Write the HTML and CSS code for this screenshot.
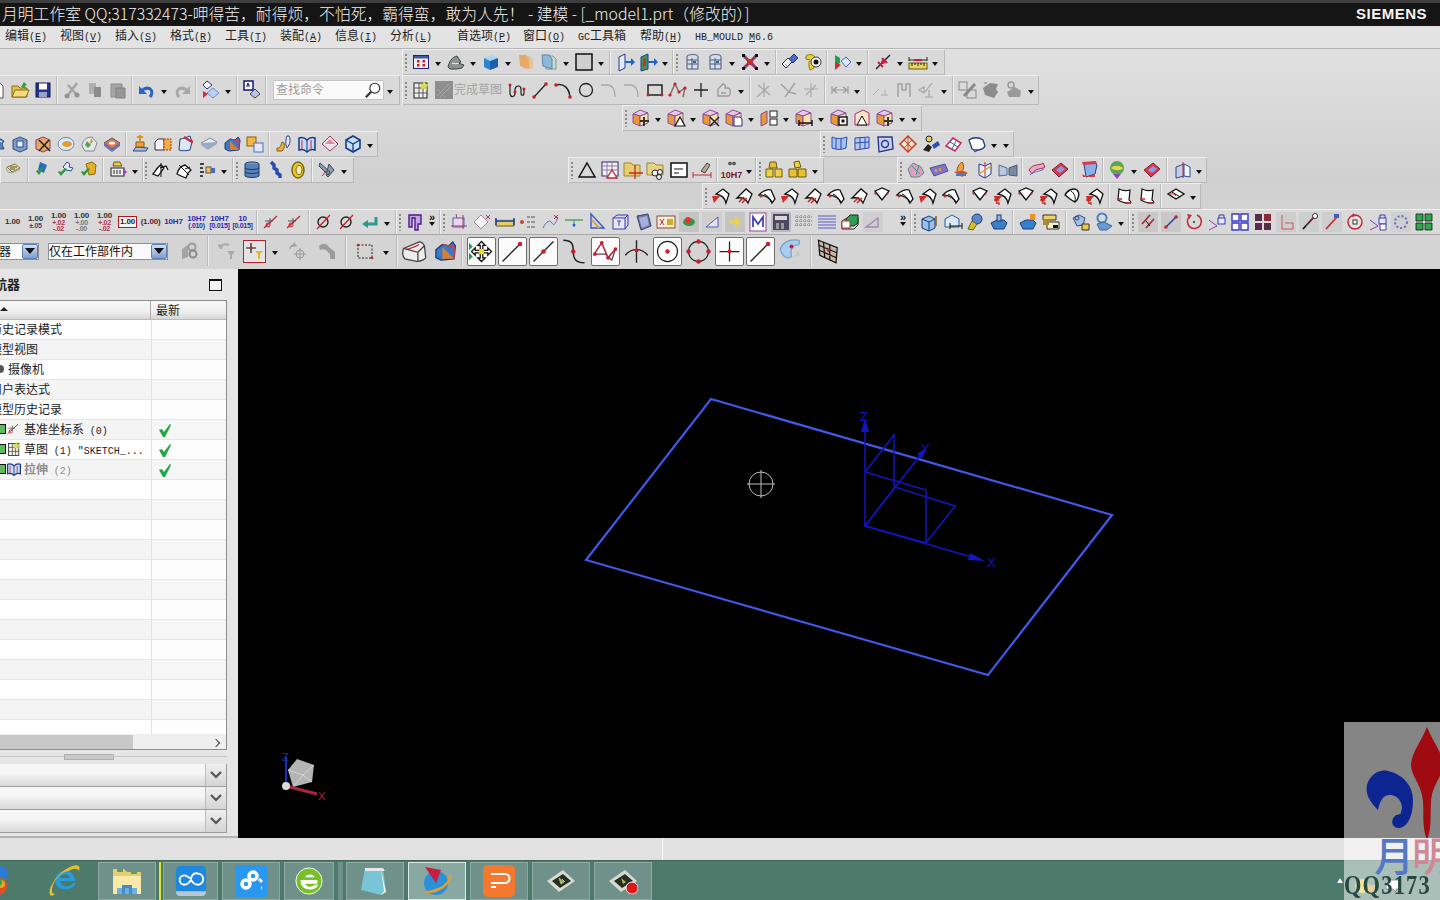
FILE: index.html
```html
<!DOCTYPE html>
<html lang="zh-CN">
<head>
<meta charset="utf-8">
<title>NX 建模</title>
<link rel="stylesheet" href="styles.css">
</head>
<body>
<svg class="defs" aria-hidden="true">
<symbol id="cal" viewBox="0 0 20 20"><rect x="2.5" y="3.5" width="15" height="13" fill="#eee" stroke="#23237a"/><rect x="3" y="4" width="14" height="2.5" fill="#3a5ab0"/><path d="M6 8h2.500v2.500H6zm5.500 0H14v2.500h-2.500zM6 12h2.500v2.500H6zm5.500 0H14v2.500h-2.500z" fill="#c81e2e"/></symbol>
<symbol id="shd" viewBox="0 0 20 20"><path d="M2 15c1-5 4-10 9-11l4 6-3 1 6 2-2 3-5 1H4z" fill="#8d9290" stroke="#3f4444"/><path d="M6 11c2 1 5 1 7 0" stroke="#fff" fill="none"/></symbol>
<symbol id="cub" viewBox="0 0 20 20"><path d="M3 6l8-3 6 3-8 3z" fill="#a8d6f2"/><path d="M3 6l6 3v9l-6-3z" fill="#2c86d0"/><path d="M9 9l8-3v9l-8 3z" fill="#1b60a8"/></symbol>
<symbol id="fo" viewBox="0 0 20 20"><path d="M4 4h10l3 3v10H7z" fill="#dcc6a8"/><path d="M3 3h7l3 4v10l-9-3z" fill="#e8a868"/></symbol>
<symbol id="fb" viewBox="0 0 20 20"><path d="M4 4h10l3 3v10H7z" fill="#c8dcc8" stroke="#7a9a9a"/><path d="M3 3h7l3 4v10l-9-3z" fill="#8cb8dc" stroke="#5a86a8"/></symbol>
<symbol id="sq" viewBox="0 0 20 20"><rect x="2" y="2" width="16" height="16" fill="#cfcfcf" stroke="#111" stroke-width="1.500"/></symbol>
<symbol id="dr" viewBox="0 0 20 20"><path d="M4 5l6-3v14l-6 3z" fill="#e4eaf4" stroke="#223a88"/><path d="M10 9h6V6l4 4-4 4v-3h-6z" fill="#1e64c8"/></symbol>
<symbol id="dv" viewBox="0 0 20 20"><path d="M3 5l7-3v15l-7 2z" fill="#3a9a5a" stroke="#223a88"/><path d="M5 7l3-1v8l-3 1z" fill="#c82e3e"/><path d="M10 9h6V6l4 4-4 4v-3h-6z" fill="#1e64c8"/></symbol>
<symbol id="db" viewBox="0 0 20 20"><path d="M5 4c3-2 9-2 11 0v13H5z" fill="#d8dee8" stroke="#4a5a7a"/><path d="M5 8h11M5 12h11M10 6v11" stroke="#4a5a7a" fill="none"/><rect x="11" y="9" width="3" height="2" fill="#2a6a9a"/></symbol>
<symbol id="nd" viewBox="0 0 20 20"><path d="M4 4l12 12M4 16 16 4" stroke="#8a3a6a" stroke-width="3"/><path d="M2 2h3v3H2zm13 0h3v3h-3zM2 15h3v3H2zm13 0h3v3h-3z" fill="#111"/><circle cx="10" cy="10" r="3" fill="#d02a2a"/></symbol>
<symbol id="kd" viewBox="0 0 20 20"><path d="M2 12l6-6 4 4-6 6z" fill="#f0f0f0" stroke="#333"/><path d="M9 7l5-5 4 4-5 5z" fill="#4a6ac8" stroke="#223a88"/><path d="M5 12l2 2" stroke="#c8a020"/></symbol>
<symbol id="ey" viewBox="0 0 20 20"><path d="M3 4c4-3 10-1 9 3-1 3-2 4-1 9l-4 2c-2-6-1-8 0-10-1-1-3 0-4-1z" fill="#e8d030" stroke="#8a7a10"/><circle cx="13" cy="10" r="5" fill="#f4f4f4" stroke="#333"/><circle cx="13" cy="10" r="2.500" fill="#111"/></symbol>
<symbol id="tw" viewBox="0 0 20 20"><path d="M3 3l5 3v5l-5 3z" fill="#20a040"/><path d="M3 10l6 3-6 5z" fill="#d02a3a"/><path d="M9 9l5-4 5 5-5 5z" fill="#dce8f8" stroke="#4a6ac8"/></symbol>
<symbol id="ax" viewBox="0 0 20 20"><path d="M3 17 17 3" stroke="#222" stroke-width="1.500"/><path d="M5 10l5 5M9 6l5 5" stroke="#c81e3e" stroke-width="2"/><circle cx="10" cy="10" r="2" fill="#c81e3e"/></symbol>
<symbol id="ru" viewBox="0 0 20 20"><path d="M1 8h18" stroke="#222"/><rect x="1" y="11" width="18" height="6" fill="#e8d460" stroke="#6a5a10"/><path d="M4 11v3M7 11v2M10 11v3M13 11v2M16 11v3M1 5v4M19 5v4" stroke="#222"/><path d="M6 8h8" stroke="#c81e3e" stroke-width="2"/></symbol>
<symbol id="new" viewBox="0 0 20 20"><path d="M5 2h7l4 4v12H5z" fill="#fff" stroke="#555"/></symbol>
<symbol id="opn" viewBox="0 0 20 20"><path d="M2 6h6l2 2h7v9H2z" fill="#e8c050" stroke="#8a6a10"/><path d="M2 17l3-7h14l-3 7z" fill="#f4dc80" stroke="#8a6a10"/><path d="M11 7l3-5 3 3-2 1 1 3z" fill="#30a040"/></symbol>
<symbol id="sav" viewBox="0 0 20 20"><rect x="3" y="3" width="14" height="14" fill="#24348e" stroke="#111a5a"/><rect x="6" y="3.500" width="8" height="6" fill="#fff"/><rect x="6" y="12" width="8" height="5" fill="#9aa2c8"/></symbol>
<symbol id="cut" viewBox="0 0 20 20"><path d="M6 15 15 3M14 14 6 5" stroke="#a4a4a4" stroke-width="2.500"/><circle cx="5" cy="16" r="2.500" fill="#949494"/><circle cx="15" cy="15" r="2.500" fill="#949494"/></symbol>
<symbol id="cpy" viewBox="0 0 20 20"><path d="M4 3h7v11H4z" fill="#b0b0b0"/><path d="M9 7h7v10H9z" fill="#8c8c8c"/></symbol>
<symbol id="pst" viewBox="0 0 20 20"><path d="M3 4h11v13H3z" fill="#a4a4a4" stroke="#8a8a8a"/><path d="M8 8h9v10H8z" fill="#969696" stroke="#808080"/></symbol>
<symbol id="und" viewBox="0 0 20 20"><path d="M13 17c4-5 1-11-6-8L4 11" fill="none" stroke="#2a64c8" stroke-width="3"/><path d="M2 6v8h8z" fill="#2a64c8"/></symbol>
<symbol id="red" viewBox="0 0 20 20"><path d="M7 17c-4-5-1-11 6-8l3 2" fill="none" stroke="#a8a8a8" stroke-width="3"/><path d="M18 6v8h-8z" fill="#a8a8a8"/></symbol>
<symbol id="ly" viewBox="0 0 20 20"><path d="M6 1l5 4-5 4-4-4z" fill="#fff" stroke="#28288a"/><path d="M12 8l6 5-6 5-6-5z" fill="#b8d0f4" stroke="#6a8ac8"/><path d="M2 11l5 3-5 4z" fill="#d02a3a"/></symbol>
<symbol id="ly2" viewBox="0 0 20 20"><rect x="2" y="1" width="9" height="9" fill="#fff" stroke="#111a6a" stroke-width="1.500"/><path d="M5 7V5l1-2 1 2v2M5 5h2" stroke="#111a6a" fill="none"/><path d="M13 9l5 5-5 4-5-4z" fill="#b8c4e8" stroke="#444"/></symbol>
<symbol id="mag" viewBox="0 0 20 20"><circle cx="12" cy="8" r="5.500" fill="#fff" stroke="#333" stroke-width="1.300"/><path d="M8 12l-6 6" stroke="#333" stroke-width="2.500"/></symbol>
<symbol id="skt" viewBox="0 0 20 20"><rect x="3" y="3" width="13" height="15" fill="#eee" stroke="#222"/><path d="M3 8h13M3 13h13M8 3v15M12 3v15" stroke="#555"/><path d="M13 1l1.500 3 3.500.500-2.500 2.500.500 3-3-1.500-3 1.500.500-3L8 4.500l3.500-.500z" fill="#d8dc50"/></symbol>
<symbol id="gbx" viewBox="0 0 20 20"><rect x="1" y="1" width="18" height="18" fill="#8e8e8e"/><path d="M3 16 16 3M6 17 17 6M3 9l8 8" stroke="#a6a6a6"/></symbol>
<symbol id="spl" viewBox="0 0 20 20"><path d="M3 5v9c1 4 5 3 5-1V9c1-4 6-4 6 0v4c0 3 3 3 3 0V9" fill="none" stroke="#222" stroke-width="1.200"/><circle cx="3" cy="5" r="1.500" fill="#c81e2e"/><circle cx="8" cy="12" r="1.500" fill="#c81e2e"/><circle cx="17" cy="9" r="1.500" fill="#c81e2e"/></symbol>
<symbol id="lin" viewBox="0 0 20 20"><path d="M4 17 16 4" stroke="#222" stroke-width="1.200"/><circle cx="4" cy="17" r="1.800" fill="#c81e2e"/><circle cx="16" cy="4" r="1.800" fill="#c81e2e"/></symbol>
<symbol id="arc" viewBox="0 0 20 20"><path d="M3 5c8-2 13 3 14 12" fill="none" stroke="#222" stroke-width="1.500"/><circle cx="3" cy="5" r="1.800" fill="#c81e2e"/><circle cx="17" cy="17" r="1.800" fill="#c81e2e"/></symbol>
<symbol id="cir" viewBox="0 0 20 20"><circle cx="10" cy="10" r="6.500" fill="none" stroke="#222" stroke-width="1.300"/></symbol>
<symbol id="cr1" viewBox="0 0 20 20"><path d="M2 5h6c6 0 8 4 8 12" fill="none" stroke="#aaa" stroke-width="1.300"/></symbol>
<symbol id="rec" viewBox="0 0 20 20"><rect x="3" y="5" width="14" height="10" fill="none" stroke="#222" stroke-width="1.500"/><circle cx="3" cy="15" r="1.400" fill="#c81e2e"/><circle cx="17" cy="15" r="1.400" fill="#c81e2e"/></symbol>
<symbol id="pro" viewBox="0 0 20 20"><path d="M2 15 7 4l4 8 6-4-2 9" fill="none" stroke="#8a6a60" stroke-width="1.500"/><circle cx="2" cy="15" r="1.600" fill="#c81e2e"/><circle cx="7" cy="4" r="1.600" fill="#c81e2e"/><circle cx="11" cy="12" r="1.600" fill="#c81e2e"/><circle cx="17" cy="8" r="1.600" fill="#c81e2e"/></symbol>
<symbol id="plu" viewBox="0 0 20 20"><path d="M10 3v14M3 10h14" stroke="#222" stroke-width="1.300"/></symbol>
<symbol id="off" viewBox="0 0 20 20"><path d="M4 16V9l5-5c2 0 3 2 2 4h3c3 0 3 8 0 8zM7 13h5" fill="none" stroke="#999" stroke-width="1.300"/></symbol>
<symbol id="tr1" viewBox="0 0 20 20"><path d="M2 17 14 6M3 5l12 10M9 3v14" stroke="#a6a6a6" stroke-width="1.200"/></symbol>
<symbol id="tr2" viewBox="0 0 20 20"><path d="M3 4l8 8M17 3 7 17M11 12l7 2" stroke="#a0a0a0" stroke-width="1.400"/></symbol>
<symbol id="tr3" viewBox="0 0 20 20"><path d="M10 3v14M3 9h14M5 15 15 5" stroke="#aaa" stroke-width="1.100"/></symbol>
<symbol id="mir" viewBox="0 0 20 20"><path d="M2 6v8M18 6v8M2 10h16M7 7l-4 3 4 3M13 7l4 3-4 3" stroke="#9a9a9a" fill="none" stroke-width="1.200"/></symbol>
<symbol id="e1" viewBox="0 0 20 20"><path d="M2 15 8 9M10 15h7M14 10v5" stroke="#aaa"/></symbol>
<symbol id="e2" viewBox="0 0 20 20"><path d="M4 17V4h4v6h4V4h4v13" fill="none" stroke="#a0a0a0" stroke-width="1.500"/></symbol>
<symbol id="e3" viewBox="0 0 20 20"><path d="M2 10l5-3v6zM15 3 8 12M12 10v7M8 17h8" stroke="#a4a4a4" fill="none" stroke-width="1.200"/></symbol>
<symbol id="c1" viewBox="0 0 20 20"><rect x="1" y="2" width="8" height="8" fill="none" stroke="#8a8a8a"/><rect x="9" y="10" width="9" height="8" fill="none" stroke="#8a8a8a"/><path d="M6 16 17 4" stroke="#8a8a8a" stroke-width="3"/></symbol>
<symbol id="c2" viewBox="0 0 20 20"><path d="M2 8 9 3l8 1-2 5 2 3-4 6-9-3z" fill="#8c8c8c"/><path d="M3 3h3" stroke="#aaa" stroke-width="2"/></symbol>
<symbol id="c3" viewBox="0 0 20 20"><circle cx="7" cy="5" r="3" fill="none" stroke="#999" stroke-width="1.500"/><path d="M3 12l8-5 6 4-1 6H5z" fill="#9a9a9a"/></symbol>
<symbol id="pk" viewBox="0 0 20 20"><path d="M2 6l7-4 8 3-8 3z" fill="#e8c8e8" stroke="#8a4a9a"/><path d="M2 6l7 2v10l-7-3z" fill="#e89a3a" stroke="#8a4a9a"/><path d="M9 8l8-3v10l-8 3z" fill="#f4e4a8" stroke="#8a4a9a"/></symbol>
<symbol id="pa" viewBox="0 0 20 20"><use href="#pk"/><path d="M13 9v9M9 13h9" stroke="#333" stroke-width="2"/></symbol>
<symbol id="pb" viewBox="0 0 20 20"><use href="#pk"/><path d="M14 9l5 9H9z" fill="#fff" stroke="#111" stroke-width="1.200"/></symbol>
<symbol id="pc" viewBox="0 0 20 20"><use href="#pk"/><path d="M9 9l9 9M18 9l-9 9" stroke="#222" stroke-width="1.500"/></symbol>
<symbol id="pd" viewBox="0 0 20 20"><use href="#pk"/><path d="M10 9h6l2 2v7h-8z" fill="#fff" stroke="#28288a"/></symbol>
<symbol id="pe" viewBox="0 0 20 20"><path d="M2 6l6-3v12l-6 3z" fill="#e89a3a" stroke="#8a4a9a"/><rect x="11" y="3" width="7" height="6" fill="#fff" stroke="#222"/><rect x="11" y="11" width="7" height="6" fill="#fff" stroke="#222"/></symbol>
<symbol id="pf" viewBox="0 0 20 20"><use href="#pk"/><path d="M5 15h13M5 12v6M18 12v6" stroke="#111" stroke-width="1.400"/></symbol>
<symbol id="pg" viewBox="0 0 20 20"><use href="#pk"/><rect x="10" y="9" width="8" height="8" fill="#fff" stroke="#111" stroke-width="1.400"/><rect x="12.500" y="11.500" width="3" height="3" fill="#111"/></symbol>
<symbol id="ph" viewBox="0 0 20 20"><path d="M3 6l8-4 6 3v12H3z" fill="#f4e4c8" stroke="#b02a6a"/><path d="M10 8l5 9H5z" fill="#fff" stroke="#111"/></symbol>
<symbol id="st" viewBox="0 0 20 20"><path d="M3 3c5 2 9 2 15 0l-1 11c-5 2-9 2-14 0z" fill="#a8c0f0" stroke="#2a4ab0"/><path d="M7 4v11M12 4v11" stroke="#2a4ab0"/></symbol>
<symbol id="sg" viewBox="0 0 20 20"><path d="M3 4l14-1v11L3 16z" fill="#b8c8ec" stroke="#2a4ab0"/><path d="M3 9l14-1M8 4v11M13 4v11" stroke="#2a4ab0"/></symbol>
<symbol id="sh" viewBox="0 0 20 20"><path d="M3 3h14l1 12-14 3z" fill="#c8d0ec" stroke="#2a3a8a" stroke-width="1.400"/><circle cx="10" cy="10" r="3.500" fill="none" stroke="#2a3a8a" stroke-width="1.500"/></symbol>
<symbol id="sr" viewBox="0 0 20 20"><path d="M10 2l8 8-8 8-8-8z" fill="#f4e8c8" stroke="#c83a2a" stroke-width="1.500"/><path d="M6 6l8 8M14 6l-8 8M10 2v16" stroke="#c83a2a"/></symbol>
<symbol id="sp" viewBox="0 0 20 20"><circle cx="8" cy="5" r="3" fill="#e8d060" stroke="#222"/><path d="M2 16l5-6 4 3-3 5z" fill="#222"/><path d="M11 11l6-4 2 4-6 4z" fill="#3050b0"/></symbol>
<symbol id="sm" viewBox="0 0 20 20"><path d="M2 12 9 4l8 5-6 8z" fill="#fff" stroke="#c02a6a" stroke-width="1.500"/><path d="M6 8l8 5M8 15l4-8" stroke="#2a6a9a"/></symbol>
<symbol id="bk" viewBox="0 0 20 20"><path d="M2 6c4-3 10-3 14 0l2 6c-2 4-8 5-13 3z" fill="#fff" stroke="#223a88" stroke-width="1.300"/><path d="M6 15l2 3 3-2" stroke="#223a88" fill="none"/></symbol>
<symbol id="bb" viewBox="0 0 20 20"><path d="M3 8l7-5 7 4-2 3 2 5H6z" fill="#5a82b8" stroke="#34507a"/><path d="M6 8l5-2 4 2" fill="none" stroke="#fff"/></symbol>
<symbol id="bs" viewBox="0 0 20 20"><path d="M3 6l7-3 7 3v9l-7 3-7-3z" fill="#7a9ad0" stroke="#33507a"/><rect x="7" y="7" width="6" height="6" fill="#e8f0f8" stroke="#33507a"/></symbol>
<symbol id="sx" viewBox="0 0 20 20"><path d="M3 6l7-3 7 3v9l-7 3-7-3z" fill="#e8a860" stroke="#8a3a6a"/><path d="M6 6l11 11M16 6 6 17" stroke="#222" stroke-width="1.500"/></symbol>
<symbol id="ov" viewBox="0 0 20 20"><ellipse cx="10" cy="10" rx="8" ry="6.500" fill="#dceaf4" stroke="#6a8ab0"/><ellipse cx="11" cy="10" rx="5" ry="3" fill="#e89a30"/></symbol>
<symbol id="gr" viewBox="0 0 20 20"><path d="M3 12C3 7 7 3 13 3l5 6-3 8H6z" fill="#e4e8e4" stroke="#7a8a9a"/><path d="M8 7l4 4-3 3-3-3z" fill="#5aa05a"/><path d="M12 4l2 4-3 2z" fill="#d09030"/></symbol>
<symbol id="dp" viewBox="0 0 20 20"><path d="M2 9l8-5 8 5-8 6z" fill="#e07a3a" stroke="#5a4a9a"/><path d="M2 9v3l8 6 8-6V9l-8 6z" fill="#6a70b8"/><ellipse cx="10" cy="9" rx="3" ry="1.500" fill="#fff"/></symbol>
<symbol id="ex" viewBox="0 0 20 20"><path d="M3 17h13l2-3-12-1z" fill="#a4c0e0" stroke="#2a4a7a"/><path d="M6 13V8h8v5z" fill="#f0a040" stroke="#8a5a10"/><path d="M10 1v7M7 3h6" stroke="#d89020" stroke-width="2"/></symbol>
<symbol id="ob" viewBox="0 0 20 20"><path d="M2 8l3-3h6v11H2z" fill="#eef2f8" stroke="#333"/><path d="M11 5h7v11h-7z" fill="#f0b040" stroke="#c02a2a" stroke-dasharray="2 1"/></symbol>
<symbol id="pg2" viewBox="0 0 20 20"><path d="M4 5c3 0 7-2 10-3l2 6-2 8c-4 1-8 1-11 0z" fill="#dce8f8" stroke="#223a88"/><path d="M8 3c3 2 6 4 9 5" stroke="#c02a3a" stroke-width="2.500"/></symbol>
<symbol id="sl" viewBox="0 0 20 20"><path d="M2 9l9-5 7 4-9 6z" fill="#e8eef4" stroke="#7a8a9a"/><path d="M2 9v2l7 5 9-6V8" fill="#9aaac4"/></symbol>
<symbol id="bx" viewBox="0 0 20 20"><path d="M3 9l5-4 5 1 3-3 2 3-1 10-10 1-4-2z" fill="#3a78c8" stroke="#1a3a7a"/><path d="M8 5l9 2v9" fill="none" stroke="#d04040" stroke-width="1.200"/><path d="M8 7v9h9" fill="#d88030"/></symbol>
<symbol id="yl" viewBox="0 0 20 20"><rect x="2" y="3" width="9" height="9" fill="#f0b840" stroke="#8a6010"/><rect x="9" y="9" width="9" height="9" fill="#e8e8f4" stroke="#4a6ac8"/></symbol>
<symbol id="hn" viewBox="0 0 20 20"><path d="M3 14c3 1 4-3 5-6l2 1c1 3 0 7-2 8H3z" fill="#e8b040" stroke="#8a5a10"/><path d="M13 2c-1 3-2 8 0 12 3-4 4-8 2-12z" fill="#e8eef8" stroke="#223a88"/></symbol>
<symbol id="bo" viewBox="0 0 20 20"><path d="M2 4c3-1 6 0 8 2 2-2 5-3 8-2v12c-3-1-6 0-8 2-2-2-5-3-8-2z" fill="#c8daf4" stroke="#15388a" stroke-width="1.500"/><path d="M10 6v12" stroke="#15388a"/><path d="M5 6v9M14 6v9" stroke="#c02a3a"/></symbol>
<symbol id="pr" viewBox="0 0 20 20"><path d="M10 2l8 8-8 7-8-7z" fill="#e8e4ec" stroke="#a03a5a"/><path d="M10 5l5 5H5z" fill="#e08aa0"/></symbol>
<symbol id="cu" viewBox="0 0 20 20"><path d="M10 2l7 4v8l-7 4-7-4V6z" fill="#c8e0f8" stroke="#123a8a" stroke-width="1.600"/><path d="M3 6l7 4 7-4M10 10v8" stroke="#123a8a" stroke-width="1.300" fill="none"/></symbol>
<symbol id="ty" viewBox="0 0 20 20"><path d="M3 7l8-3 5 4-8 4z" fill="#f0dc90" stroke="#8a7a30"/><path d="M6 7h7M6 9h5" stroke="#555"/><path d="M3 7c-1 2 0 4 1 5l4 1 8-4" fill="none" stroke="#999"/></symbol>
<symbol id="ck" viewBox="0 0 20 20"><path d="M8 2l7 3-3 8-6-3z" fill="#2a6ac0"/><path d="M4 11l3 4 5-7-2-1-3 4-2-1z" fill="#2a9a3a"/></symbol>
<symbol id="ck2" viewBox="0 0 20 20"><path d="M8 7l4-5 3 2-1 3 4 1-2 3-5-1z" fill="#e8e8f0" stroke="#2a4a9a"/><path d="M3 12l3 4 6-7-2-1-4 4-2-1z" fill="#2a9a3a"/></symbol>
<symbol id="ck3" viewBox="0 0 20 20"><path d="M8 4l6-2 4 3-1 9-6 1z" fill="#e8b020" stroke="#8a6a10"/><path d="M3 12l3 4 6-7-2-1-4 4-2-1z" fill="#2a9a3a"/></symbol>
<symbol id="cs" viewBox="0 0 20 20"><path d="M6 2h6l2 4h-9z" fill="#e8cc50" stroke="#6a5a10"/><rect x="3" y="8" width="13" height="8" fill="#eee" stroke="#222"/><path d="M5 13h9M5 11h9" stroke="#222" stroke-dasharray="2 1"/><path d="M15 8l4 4-4 4z" fill="#a040c0"/></symbol>
<symbol id="hs" viewBox="0 0 20 20"><path d="M2 14c3-4 6-9 8-9l3 3c-2 2-4 6-6 8zM9 8l6-2 2 4" fill="#fff" stroke="#111" stroke-width="1.300"/><path d="M10 3v14" stroke="#111"/></symbol>
<symbol id="hg" viewBox="0 0 20 20"><path d="M3 14c1-4 4-8 8-9l6 5-3 3-2 5-5-2z" fill="#fff" stroke="#111" stroke-width="1.300"/><path d="M5 5l10 10M11 9l5-2" stroke="#111"/></symbol>
<symbol id="hl" viewBox="0 0 20 20"><path d="M3 4h4M3 8h3M3 12h4M3 16h3" stroke="#111" stroke-width="1.400"/><rect x="9" y="7" width="5" height="6" fill="#f0c050" stroke="#555"/><rect x="14" y="8" width="4" height="5" fill="#4a6ac8"/></symbol>
<symbol id="dk" viewBox="0 0 20 20"><ellipse cx="10" cy="4" rx="7" ry="2" fill="#7a9ac8" stroke="#123a6a"/><path d="M3 4v12c3 2 11 2 14 0V4M3 8c3 2 11 2 14 0M3 12c3 2 11 2 14 0" fill="#5a80b8" stroke="#123a6a"/></symbol>
<symbol id="sg2" viewBox="0 0 20 20"><path d="M6 2l3 3v3l3 2v3l3 2v3" fill="none" stroke="#2a4ab0" stroke-width="3.400"/></symbol>
<symbol id="rg" viewBox="0 0 20 20"><ellipse cx="10" cy="10" rx="6" ry="8" fill="#e8c830" stroke="#7a6a10" stroke-width="1.500"/><ellipse cx="11" cy="10" rx="3" ry="4.500" fill="#f4ecb0" stroke="#7a6a10"/></symbol>
<symbol id="wd" viewBox="0 0 20 20"><path d="M3 3l10 9-2 3L2 6zM12 4l5 6-6 7-2-2z" fill="#8a98a8" stroke="#3a4a5a"/><path d="M5 16l4-5" stroke="#c02a4a"/></symbol>
<symbol id="tri" viewBox="0 0 20 20"><path d="M10 3 18 17H2z" fill="none" stroke="#111" stroke-width="1.500"/></symbol>
<symbol id="tbx" viewBox="0 0 20 20"><rect x="2" y="2" width="16" height="14" fill="#f4f0f4" stroke="#2a2a6a"/><path d="M2 6h16M2 10h16M7 2v14M12 2v14" stroke="#8a7aa8"/><path d="M12 10l5 8H7z" fill="#fff" stroke="#c02a3a" stroke-width="1.400"/></symbol>
<symbol id="fg" viewBox="0 0 20 20"><path d="M1 3h7l2 2h7v11H1z" fill="#e8cc70" stroke="#9a8a30"/><path d="M12 5v14M6 13h14" stroke="#c02a2a" stroke-width="1.300"/></symbol>
<symbol id="fc" viewBox="0 0 20 20"><path d="M1 3h7l2 2h7v10H1z" fill="#e8d488" stroke="#9a8a30"/><circle cx="9" cy="13" r="3" fill="#eee" stroke="#222"/><circle cx="14" cy="12" r="2.500" fill="#eee" stroke="#222"/><circle cx="13" cy="17" r="2.500" fill="#eee" stroke="#222"/></symbol>
<symbol id="not" viewBox="0 0 20 20"><rect x="2" y="3" width="16" height="14" fill="#fff" stroke="#111" stroke-width="1.500"/><path d="M5 9h9M5 13h5" stroke="#111"/></symbol>
<symbol id="dm" viewBox="0 0 20 20"><path d="M1 12v6M19 12v6M1 15h18" stroke="#c02a3a"/><path d="M9 11 15 3l3 2-5 8z" fill="#b8a890" stroke="#444"/></symbol>
<symbol id="bi" viewBox="0 0 20 20"><circle cx="6" cy="5" r="3.500" fill="#333"/><circle cx="14" cy="5" r="3.500" fill="#333"/><circle cx="6" cy="5" r="1.500" fill="#999"/><circle cx="14" cy="5" r="1.500" fill="#999"/></symbol>
<symbol id="cb3" viewBox="0 0 20 20"><path d="M5 2h6l1 6H4z" fill="#e8c030" stroke="#6a5a10"/><path d="M1 9h7v8H1zM10 9h7v8h-7z" fill="#f0d040" stroke="#6a5a10"/></symbol>
<symbol id="cb4" viewBox="0 0 20 20"><path d="M6 2l5-1 2 6-6 1z" fill="#f0d040" stroke="#6a5a10"/><path d="M1 9h8v8H1zM10 9h8v8h-8z" fill="#e8c030" stroke="#6a5a10"/></symbol>
<symbol id="nv" viewBox="0 0 20 20"><path d="M2 9l5-6 8 4 3 6-5 4H5z" fill="#e89ac0" stroke="#5a8a8a"/><path d="M6 6l8 8M13 5l-3 10" stroke="#3a9a8a"/></symbol>
<symbol id="pu" viewBox="0 0 20 20"><path d="M1 8l15-4 3 7-14 5z" fill="#8078c0" stroke="#5048a0"/><path d="M6 9h2v3H6zm4-1h2v3h-2z" fill="#e89a40"/></symbol>
<symbol id="ct" viewBox="0 0 20 20"><path d="M2 12l8-2 6 3-6 4z" fill="#d05030"/><path d="M5 11c0-4 2-7 5-9 2 3 2 5 1 8" fill="#f0a040" stroke="#8a5a10"/><path d="M4 15h10" stroke="#3a80c8" stroke-width="2"/></symbol>
<symbol id="ts" viewBox="0 0 20 20"><path d="M4 4l6 2 6-3v11l-6 4-6-3z" fill="#e8eef8" stroke="#223a88"/><path d="M10 2v16" stroke="#c02a3a"/><path d="M4 14l12-8" stroke="#d8a030" stroke-width="1.500"/></symbol>
<symbol id="bf" viewBox="0 0 20 20"><path d="M1 5l8 3v7l-8 1z" fill="#bcc8dc" stroke="#4a6a9a"/><path d="M19 5l-8 3v7l8 1z" fill="#7a8aa0" stroke="#4a5a7a"/></symbol>
<symbol id="wv" viewBox="0 0 20 20"><path d="M2 10c4-7 11-4 14-7l2 4c-4 3-9 0-13 7z" fill="#f0a8b8" stroke="#a02a5a"/><path d="M3 15c4-4 9-3 14-6" stroke="#5a6ac8" fill="none"/></symbol>
<symbol id="sd" viewBox="0 0 20 20"><path d="M2 10l9-7 7 6-9 8z" fill="#d83a4a" stroke="#801a2a"/><path d="M6 10l5-4 4 3-5 4z" fill="#8a9ae8"/></symbol>
<symbol id="ug" viewBox="0 0 20 20"><path d="M5 4l10-2 3 3-2 9-9 3z" fill="#8ab0e8" stroke="#223a88"/><path d="M3 2l14-1 1 3-14 1zM3 14l5 3 8-3v3H4z" fill="#d83a4a"/></symbol>
<symbol id="gl" viewBox="0 0 20 20"><circle cx="10" cy="8" r="7" fill="#58a850"/><path d="M4 8c3-3 8-3 12 0-2 3-8 3-12 0z" fill="#f0d050"/><path d="M6 14l4 5 4-5z" fill="#9040c0"/></symbol>
<symbol id="dh" viewBox="0 0 20 20"><path d="M4 7l8-3v12l-8 2z" fill="#c0d0e8" stroke="#2a4a9a"/><path d="M12 4l6 3v10l-6-1z" fill="#f0f4f8" stroke="#2a4a9a"/><path d="M11 2v16" stroke="#c02a3a"/></symbol>
<symbol id="fl" viewBox="0 0 20 20"><path d="M5 8l7-5 6 5-3 9c-1-5-4-8-10-9z" fill="#fff" stroke="#111" stroke-width="1.300"/><path d="M1 10l8 0-6 7z" fill="#d02a2a"/></symbol>
<symbol id="fm" viewBox="0 0 20 20"><path d="M3 12 12 3l6 5-4 9c-2-4-5-6-11-5z" fill="#fff" stroke="#111" stroke-width="1.300"/><path d="M5 16l5-5M8 17l5-5" stroke="#c02a2a" stroke-width="1.500"/></symbol>
<symbol id="fn" viewBox="0 0 20 20"><path d="M2 9c3-4 9-6 12-5l4 9-3 4c-1-4-6-8-13-8z" fill="#fff" stroke="#111" stroke-width="1.300"/><path d="M7 8c3 1 6 4 7 8" stroke="#111" fill="none"/><circle cx="4" cy="10" r="1.500" fill="#c02a2a"/></symbol>
<symbol id="fr" viewBox="0 0 20 20"><use href="#fl"/><path d="M1 14h5M3 17h3v2" stroke="#c02a2a" stroke-width="1.300" fill="none"/></symbol>
<symbol id="fp" viewBox="0 0 20 20"><path d="M3 5l7-3 7 3-7 9z" fill="#fff" stroke="#111" stroke-width="1.300"/><path d="M10 14l-5-6" stroke="#111"/><path d="M2 6l3 2-2 1zM17 6l-3 2 2 1z" fill="#c02a2a"/></symbol>
<symbol id="fq" viewBox="0 0 20 20"><path d="M3 9c3-6 9-7 12-5 3 3 2 9-2 12-3-1-6-4-10-7z" fill="#fff" stroke="#111" stroke-width="1.400"/><path d="M9 5c3 2 5 6 4 10" stroke="#111" fill="none"/></symbol>
<symbol id="fs" viewBox="0 0 20 20"><path d="M5 3c4 2 8 2 11 1l-1 10c3 2 2 3 0 3-4 0-8-1-11-3z" fill="#fff" stroke="#111" stroke-width="1.200"/><path d="M3 13h5M11 17h6" stroke="#c02a2a" stroke-width="1.500"/></symbol>
<symbol id="ft" viewBox="0 0 20 20"><path d="M2 8l8-5 8 5-8 5z" fill="#fff" stroke="#111" stroke-width="1.400"/><path d="M6 6l8 5" stroke="#111"/><path d="M4 8h4l2 2" stroke="#c02a2a" fill="none"/></symbol>
<symbol id="me" viewBox="0 0 20 20"><path d="M2 16 15 4" stroke="#c81e2e" stroke-width="1.200"/><path d="M3 9h8M8 6v6" stroke="#555"/><circle cx="6" cy="13" r="2" fill="none" stroke="#c81e2e"/></symbol>
<symbol id="cc" viewBox="0 0 20 20"><circle cx="9" cy="10" r="5" fill="none" stroke="#222" stroke-width="1.400"/><path d="M3 17 16 3" stroke="#c81e2e" stroke-width="1.300"/></symbol>
<symbol id="ag" viewBox="0 0 20 20"><path d="M16 5v7H7" fill="none" stroke="#2a9a8a" stroke-width="3"/><path d="M8 8v8l-6-4z" fill="#2a9a8a"/></symbol>
<symbol id="ts2" viewBox="0 0 20 20"><path d="M4 3h12v9h-3v6h-3V6H7v9H4z" fill="#c8a0e8" stroke="#4a1a8a" stroke-width="1.400"/></symbol>
<symbol id="tq" viewBox="0 0 20 20"><rect x="4" y="6" width="11" height="9" fill="#e8d8e8" stroke="#5a5ab8"/><path d="M14 3v14M2 14h16M7 2l1 4" stroke="#a03a6a"/></symbol>
<symbol id="tv" viewBox="0 0 20 20"><path d="M2 10l7-7 7 7-7 7z" fill="#f4f4f4" stroke="#a08aa0"/><path d="M14 3l4 4M18 3l-4 4" stroke="#a03a6a"/></symbol>
<symbol id="tl" viewBox="0 0 20 20"><path d="M1 7v7h18V7" fill="#e4cc60" stroke="#6a5a10"/><path d="M1 9h18M1 6v7M19 6v7" stroke="#1a3a9a" stroke-width="1.400"/></symbol>
<symbol id="td" viewBox="0 0 20 20"><circle cx="4" cy="10" r="2" fill="#d04040"/><path d="M9 5h3M9 10h3M9 15h3M13 5h4M13 10h4M13 15h4" stroke="#808080" stroke-width="1.600"/></symbol>
<symbol id="tp" viewBox="0 0 20 20"><path d="M2 16C6 8 9 8 11 11s3 2 6-6" fill="none" stroke="#4a6ac8"/><path d="M13 3l4 4M17 3l-4 4" stroke="#c02a3a"/></symbol>
<symbol id="tg" viewBox="0 0 20 20"><path d="M1 8h18" stroke="#4aa04a" stroke-width="1.400"/><path d="M10 8v7" stroke="#3a80c8"/><circle cx="10" cy="13" r="1.500" fill="#3a60c8"/></symbol>
<symbol id="tt" viewBox="0 0 20 20"><path d="M4 2l13 14H4z" fill="#d8d0f0" stroke="#3a5ab8" stroke-width="1.400"/><path d="M5 8l7 8" stroke="#c8b040" stroke-width="2"/></symbol>
<symbol id="tb3" viewBox="0 0 20 20"><rect x="3" y="6" width="12" height="11" fill="#e8e8f4" stroke="#3a3ab8"/><path d="M3 6l4-3h11l-3 3M15 6l3-3v10l-3 4M7 9h4M9 9v5" fill="none" stroke="#3a3ab8"/></symbol>
<symbol id="tf" viewBox="0 0 20 20"><path d="M4 4l11-2 3 12-10 4z" fill="#6a78b8" stroke="#3a3a6a"/><path d="M6 6l8-2 2 9-7 3z" fill="#a8b0d8"/></symbol>
<symbol id="tm" viewBox="0 0 20 20"><rect x="1" y="4" width="18" height="12" fill="#f4ecd8" stroke="#8a4a3a"/><path d="M4 7l4 6M8 7l-4 6" stroke="#c02a3a"/><path d="M11 7h6v6h-6z" fill="#c8b020"/></symbol>
<symbol id="tc" viewBox="0 0 20 20"><rect x="0" y="0" width="20" height="20" fill="#c4c4c4"/><ellipse cx="10" cy="10" rx="6" ry="4" fill="#2a9a4a"/><circle cx="9" cy="8" r="3" fill="#e83030"/></symbol>
<symbol id="tw2" viewBox="0 0 20 20"><rect width="20" height="20" fill="#cfcfcf"/><path d="M4 15 16 5v10z" fill="#e4e4ec" stroke="#5a5ab8"/></symbol>
<symbol id="ty2" viewBox="0 0 20 20"><rect width="20" height="20" fill="#c4c4c4"/><path d="M4 8h6V4l6 6-6 6v-4H4z" fill="#e8d050"/></symbol>
<symbol id="tmm" viewBox="0 0 20 20"><rect x="2" y="1" width="16" height="18" fill="#fff" stroke="#8a4a9a"/><path d="M5 15V5l5 7 5-7v10" fill="none" stroke="#3a3ab8" stroke-width="1.700"/></symbol>
<symbol id="tcl" viewBox="0 0 20 20"><rect width="20" height="20" fill="#b8b8c8"/><rect x="2" y="2" width="16" height="16" fill="#4a4a5a"/><path d="M4 4h12v4H4z" fill="#d8d8d8"/><path d="M5 11h3v6H5zm5 0h3v6h-3z" fill="#9a9a9a"/></symbol>
<symbol id="tgr" viewBox="0 0 20 20"><path d="M1 5h18M1 9h18M1 13h18M3 3v12M7 3v12M11 3v12M15 3v12" stroke="#6a6ab8" stroke-dasharray="1 1"/></symbol>
<symbol id="tln" viewBox="0 0 20 20"><path d="M1 4h18M1 7h18M1 10h18M1 13h18M1 16h18" stroke="#5a5ac8"/></symbol>
<symbol id="tcu" viewBox="0 0 20 20"><path d="M2 9l5-3h11v7l-4 4H2z" fill="#e8e8e8" stroke="#222"/><path d="M6 7l4-4h8v8l-4 3H6z" fill="#2aa050" stroke="#222"/><path d="M2 9h8v7H2z" fill="#fff" stroke="#c02a3a"/></symbol>
<symbol id="tgy" viewBox="0 0 20 20"><rect width="20" height="20" fill="#cfcfcf"/><path d="M3 15 15 6v9z" fill="none" stroke="#a088b8" stroke-width="1.300"/></symbol>
<symbol id="wb" viewBox="0 0 20 20"><path d="M2 7l7-3 6 3v9l-6 3-7-3z" fill="#9ac0e8" stroke="#123a7a"/><path d="M2 7l7 3 6-3M9 10v9" stroke="#123a7a" fill="none"/><path d="M16 4v10" stroke="#8a5a10" stroke-width="1.500"/></symbol>
<symbol id="wc" viewBox="0 0 20 20"><path d="M2 7l7-4 7 4v8H2z" fill="#dce8f4" stroke="#2a5a9a"/><path d="M7 14h12M7 11v6M19 11v6" stroke="#111"/></symbol>
<symbol id="wh" viewBox="0 0 20 20"><circle cx="11" cy="7" r="5" fill="#5a88c8" stroke="#223a7a"/><path d="M2 17l4-8 5 3-4 6z" fill="#d8c030" stroke="#6a5a10"/></symbol>
<symbol id="wk" viewBox="0 0 20 20"><path d="M2 11l6-3h7l3 3-3 6H5z" fill="#3a80c8" stroke="#1a3a7a"/><rect x="8" y="3" width="4" height="6" fill="#8ab8e8" stroke="#1a3a7a"/></symbol>
<symbol id="wo" viewBox="0 0 20 20"><path d="M2 11l6-3h7l3 3-3 6H5z" fill="#3a80c8" stroke="#1a3a7a"/><rect x="12" y="2" width="5" height="6" fill="#f09020"/></symbol>
<symbol id="wq" viewBox="0 0 20 20"><path d="M2 3h13v5H2z" fill="#f0d060" stroke="#333"/><path d="M6 10h12v7H6z" fill="#f4f0d8" stroke="#333"/><rect x="2" y="7" width="6" height="6" fill="#a88a30"/><rect x="12" y="13" width="5" height="3" fill="#111"/></symbol>
<symbol id="wr" viewBox="0 0 20 20"><path d="M2 6l6-3 6 3-2 7-6 1z" fill="#a8c0e0" stroke="#2a4a8a"/><circle cx="6" cy="6" r="2" fill="none" stroke="#223a7a"/><path d="M11 12h7v6h-7z" fill="#f0c840" stroke="#333"/></symbol>
<symbol id="wt" viewBox="0 0 20 20"><circle cx="8" cy="6" r="4.500" fill="none" stroke="#4a80c0" stroke-width="2"/><path d="M3 12l7-2 8 4-5 4H6z" fill="#6a9ad0" stroke="#3a6aa0"/></symbol>
<symbol id="tsl" viewBox="0 0 20 20"><rect width="20" height="20" fill="#c8c8c8"/><path d="M4 12 12 3M8 16l8-9" stroke="#b02a3a" stroke-width="1.800"/><path d="M8 9l4 5" stroke="#111"/></symbol>
<symbol id="tsn" viewBox="0 0 20 20"><rect width="20" height="20" fill="#c8c8c8"/><path d="M4 16 16 4" stroke="#2a3a9a" stroke-width="1.500"/><circle cx="5" cy="15" r="1.800" fill="#c02a3a"/><circle cx="15" cy="5" r="1.800" fill="#c02a3a"/></symbol>
<symbol id="tar" viewBox="0 0 20 20"><path d="M13 3a7 7 0 1 1-8 2" fill="none" stroke="#c02a3a" stroke-width="1.600"/><path d="M3 2l5 1-3 4z" fill="#c02a3a"/><circle cx="10" cy="10" r="1" fill="#333"/></symbol>
<symbol id="tlk" viewBox="0 0 20 20"><path d="M2 8l8 6M2 18l8-4" stroke="#8a3ab0"/><rect x="11" y="6" width="7" height="6" fill="#e8e8f8" stroke="#3a3ab0"/><path d="M12 6V3h5v3" fill="none" stroke="#3a3ab0"/></symbol>
<symbol id="tbb" viewBox="0 0 20 20"><path d="M2 2h7v7H2zm9 0h7v7h-7zM2 11h7v7H2zm9 0h7v7h-7z" fill="#fff" stroke="#3a3ac8" stroke-width="1.400"/></symbol>
<symbol id="tdk" viewBox="0 0 20 20"><path d="M2 2h7v7H2zm9 0h7v7h-7zM2 11h7v7H2zm9 0h7v7h-7z" fill="#5a2a4a"/><rect x="11" y="2" width="7" height="7" fill="#8a2a3a"/></symbol>
<symbol id="tso" viewBox="0 0 20 20"><rect width="20" height="20" fill="#cecece"/><path d="M6 3v14h11V11H9" fill="none" stroke="#c85a5a"/></symbol>
<symbol id="twn" viewBox="0 0 20 20"><rect width="20" height="20" fill="#cecece"/><path d="M4 17 15 5" stroke="#111" stroke-width="1.800"/><path d="M7 14 15 5" stroke="#c02a3a"/><circle cx="16" cy="4" r="2.500" fill="#fff" stroke="#333"/></symbol>
<symbol id="twp" viewBox="0 0 20 20"><rect width="20" height="20" fill="#cecece"/><path d="M4 17 15 5" stroke="#c02a3a" stroke-width="1.800"/><rect x="12" y="2" width="5" height="4" fill="#3a60c8"/></symbol>
<symbol id="tci" viewBox="0 0 20 20"><circle cx="10" cy="10" r="7" fill="#e4e4e4" stroke="#c02a3a" stroke-width="1.500"/><rect x="8" y="8" width="4" height="4" fill="#fff" stroke="#333"/><path d="M8 1l3 3-4 1z" fill="#c02a3a"/></symbol>
<symbol id="tlp" viewBox="0 0 20 20"><use href="#tlk"/><path d="M12 12h6v6h-6z" fill="#fff" stroke="#3a3ab0"/></symbol>
<symbol id="tgo" viewBox="0 0 20 20"><rect width="20" height="20" fill="#d0d0d0"/><circle cx="10" cy="10" r="6" fill="none" stroke="#6a6ac8" stroke-dasharray="2 2" stroke-width="2"/></symbol>
<symbol id="tgg" viewBox="0 0 20 20"><path d="M2 2h7v7H2zm9 0h7v7h-7zM2 11h7v7H2zm9 0h7v7h-7z" fill="#2aa84a" stroke="#111" stroke-width=".8"/></symbol>
<symbol id="lk" viewBox="0 0 20 20"><path d="M2 8l6-4v12l-6 2z" fill="#a4a4a4"/><circle cx="12" cy="6" r="3.500" fill="none" stroke="#9a9a9a" stroke-width="2"/><circle cx="13" cy="13" r="3.500" fill="none" stroke="#8a8a8a" stroke-width="2"/></symbol>
<symbol id="fa" viewBox="0 0 20 20"><path d="M10 10l8 0-3 4v4h-2v-4z" fill="#a8a8a8"/><path d="M12 4c-5-2-8 0-8 4" stroke="#b0b0b0" stroke-width="2.500" fill="none"/><path d="M1 3l5 1-4 4z" fill="#aaa"/></symbol>
<symbol id="fy" viewBox="0 0 20 20"><path d="M10 10h8l-3 3v5h-2v-5z" fill="#e8b820"/><path d="M6 2v10M1 7h10" stroke="#111" stroke-width="1.200"/><circle cx="6" cy="7" r="1.500" fill="#c02a2a"/></symbol>
<symbol id="ga" viewBox="0 0 20 20"><circle cx="13" cy="13" r="4" fill="none" stroke="#999"/><path d="M13 7v12M7 13h12" stroke="#999"/><path d="M9 5c-3-2-6 0-6 3" stroke="#a0a0a0" stroke-width="1.500" fill="none"/><path d="M7 1l3 4-5 1z" fill="#a4a4a4"/></symbol>
<symbol id="gb" viewBox="0 0 20 20"><path d="M1 5c4-3 7-3 10 1l6 5v7h-5v-5L8 9C6 8 4 8 2 9z" fill="#9c9c9c"/></symbol>
<symbol id="dr2" viewBox="0 0 20 20"><rect x="3" y="4" width="14" height="13" fill="none" stroke="#222" stroke-dasharray="2 1.500"/><circle cx="3" cy="4" r="1.300" fill="#c02a2a"/><circle cx="17" cy="17" r="1.300" fill="#c02a2a"/></symbol>
<symbol id="vw" viewBox="0 0 20 20"><path d="M12 18c4 0 7-2 7-3l-1-9c-1-2-3-3-4-3L2 8c-1 3-1 6 1 8z" fill="#eee" stroke="#444"/><path d="M4 9c3-1 7-2 10-4" stroke="#c8303a"/><path d="M2 8l11 3 5-5M13 11v7" fill="none" stroke="#444"/></symbol>
<symbol id="pnt" viewBox="0 0 20 20"><path d="M10 2l3 3h-2v4h4V7l3 3-3 3v-2h-4v4h2l-3 3-3-3h2v-4H5v2l-3-3 3-3v2h4V5H7z" fill="#fff" stroke="#111"/><circle cx="10" cy="10" r="2.300" fill="#e8e020"/><path d="M0 3v6l3-3zM0 11v6l3-3z" fill="#1aa04a"/></symbol>
<symbol id="lnm" viewBox="0 0 20 20"><path d="M2 18 16 4" stroke="#222"/><circle cx="16" cy="4" r="1.800" fill="#c81e2e"/></symbol>
<symbol id="lnc" viewBox="0 0 20 20"><path d="M2 18 18 2" stroke="#222"/><circle cx="10" cy="10" r="1.800" fill="#c81e2e"/></symbol>
<symbol id="crv" viewBox="0 0 20 20"><path d="M1 1c7 0 8 3 8 9 0 6 2 9 9 9" fill="none" stroke="#222" stroke-width="1.200"/><circle cx="9" cy="10" r="1.800" fill="#c81e2e"/></symbol>
<symbol id="pol" viewBox="0 0 20 20"><path d="M1 12 7 3l5 12 6-7-3 9M1 12h9l5 5" fill="none" stroke="#6a3a50"/><path d="M1 12l6-9 5 12 6-7" fill="none" stroke="#c02a50"/><circle cx="1.500" cy="12" r="1.500" fill="#c81e2e"/><circle cx="7" cy="3" r="1.500" fill="#c81e2e"/><circle cx="12" cy="15" r="1.500" fill="#c81e2e"/><circle cx="18" cy="8" r="1.500" fill="#c81e2e"/></symbol>
<symbol id="int" viewBox="0 0 20 20"><path d="M1 13c5-6 13-6 18 0M10 1v18" fill="none" stroke="#222" stroke-width="1.100"/><circle cx="10" cy="9" r="1.600" fill="#c81e2e"/></symbol>
<symbol id="cin" viewBox="0 0 20 20"><circle cx="10" cy="10" r="8" fill="none" stroke="#222"/><circle cx="10" cy="10" r="1.800" fill="#c81e2e"/></symbol>
<symbol id="cqd" viewBox="0 0 20 20"><circle cx="10" cy="10" r="8" fill="none" stroke="#222"/><circle cx="10" cy="2" r="1.800" fill="#c81e2e"/><circle cx="10" cy="18" r="1.800" fill="#c81e2e"/><circle cx="2" cy="10" r="1.800" fill="#c81e2e"/><circle cx="18" cy="10" r="1.800" fill="#c81e2e"/></symbol>
<symbol id="pls" viewBox="0 0 20 20"><path d="M10 2v16M2 10h16" stroke="#222"/><circle cx="10" cy="10" r="1.600" fill="#c81e2e"/></symbol>
<symbol id="srf" viewBox="0 0 20 20"><path d="M1 8c2-5 7-8 15-7 1 3 0 4-3 4-3 1-4 5-3 9-4 3-8-1-9-6z" fill="#a8cdf0" stroke="#7aa0c8"/><circle cx="10" cy="6" r="1.600" fill="#c81e2e"/><path d="M11 15l6-2-2-4" fill="#c8c8c8"/></symbol>
<symbol id="grd" viewBox="0 0 20 20"><path d="M2 1l15 6-1 12L3 13z" fill="#c8b8a8" stroke="#111"/><path d="M6 2.500 7 15M11 4.500l0 12.500M2.300 5 16.700 11M2.600 9 16.300 15" stroke="#111"/><circle cx="10" cy="9" r="1.300" fill="#c81e2e"/></symbol>
</svg>

<header class="title">
  <span class="title-text">月明工作室 QQ;317332473-呷得苦，耐得烦，不怕死，霸得蛮，敢为人先！ - 建模 - [_model1.prt（修改的）]</span>
  <span class="logo">SIEMENS</span>
</header>

<nav class="menu">
  <span>编辑<small>(<u>E</u>)</small></span><span>视图<small>(<u>V</u>)</small></span><span>插入<small>(<u>S</u>)</small></span><span>格式<small>(<u>R</u>)</small></span><span>工具<small>(<u>T</u>)</small></span><span>装配<small>(<u>A</u>)</small></span><span>信息<small>(<u>I</u>)</small></span><span>分析<small>(<u>L</u>)</small></span>
  <span class="m-pref">首选项<small>(<u>P</u>)</small></span><span class="m-win">窗口<small>(<u>O</u>)</small></span><span class="m-gc"><small>GC</small>工具箱</span><span class="m-help">帮助<small>(<u>H</u>)</small></span><span class="m-hb"><small>HB_MOULD <u>M</u>6.6</small></span>
</nav>

<section class="tools">
  <div class="row r1">
    <div class="tb ml402"><i class="g"></i><i class="b"><svg><use href="#cal"/></svg></i><i class="c"></i><i class="b"><svg><use href="#shd"/></svg></i><i class="c"></i><i class="b"><svg><use href="#cub"/></svg></i><i class="c"></i><i class="b"><svg><use href="#fo"/></svg></i><i class="b"><svg><use href="#fb"/></svg></i><i class="c"></i><i class="b"><svg><use href="#sq"/></svg></i><i class="c"></i><i class="s s6"></i><i class="b"><svg><use href="#dr"/></svg></i><i class="b"><svg><use href="#dv"/></svg></i><i class="c"></i><i class="s s4"></i><i class="g"></i><i class="b"><svg><use href="#db"/></svg></i><i class="b"><svg><use href="#db"/></svg></i><i class="c"></i><i class="b"><svg><use href="#nd"/></svg></i><i class="c"></i><i class="s s5"></i><i class="b"><svg><use href="#kd"/></svg></i><i class="b"><svg><use href="#ey"/></svg></i><i class="s s6"></i><i class="b"><svg><use href="#tw"/></svg></i><i class="c"></i><i class="s s6"></i><i class="b"><svg><use href="#ax"/></svg></i><i class="c"></i><i class="b"><svg><use href="#ru"/></svg></i><i class="c"></i><i class="pad4"></i></div>
  </div>
  <div class="row r2">
    <div class="tb nopad mln15"><i class="b"><svg><use href="#new"/></svg></i><i class="b"><svg><use href="#opn"/></svg></i><i class="b"><svg><use href="#sav"/></svg></i><i class="s s6"></i><i class="b"><svg><use href="#cut"/></svg></i><i class="b"><svg><use href="#cpy"/></svg></i><i class="b"><svg><use href="#pst"/></svg></i><i class="s s6"></i><i class="b"><svg><use href="#und"/></svg></i><i class="c"></i><i class="b"><svg><use href="#red"/></svg></i><i class="s s6"></i><i class="b"><svg><use href="#ly"/></svg></i><i class="c"></i><i class="s s6"></i><i class="b"><svg><use href="#ly2"/></svg></i><i class="s s6"></i><label class="search"><span>查找命令</span><svg><use href="#mag"/></svg></label><i class="c"></i><i class="pad4"></i></div>
    <div class="tb ml2"><i class="g"></i><i class="b"><svg><use href="#skt"/></svg></i><i class="b"><svg><use href="#gbx"/></svg></i><span class="finish">完成草图</span><i class="b"><svg><use href="#spl"/></svg></i><i class="b"><svg><use href="#lin"/></svg></i><i class="b"><svg><use href="#arc"/></svg></i><i class="b"><svg><use href="#cir"/></svg></i><i class="b"><svg><use href="#cr1"/></svg></i><i class="b"><svg><use href="#cr1"/></svg></i><i class="b"><svg><use href="#rec"/></svg></i><i class="b"><svg><use href="#pro"/></svg></i><i class="b"><svg><use href="#plu"/></svg></i><i class="b"><svg><use href="#off"/></svg></i><i class="c"></i><i class="s s6"></i><i class="b"><svg><use href="#tr1"/></svg></i><i class="b"><svg><use href="#tr2"/></svg></i><i class="b"><svg><use href="#tr3"/></svg></i><i class="s s6"></i><i class="b"><svg><use href="#mir"/></svg></i><i class="c"></i><i class="s s6"></i><i class="b"><svg><use href="#e1"/></svg></i><i class="b"><svg><use href="#e2"/></svg></i><i class="b"><svg><use href="#e3"/></svg></i><i class="c"></i><i class="s s6"></i><i class="b"><svg><use href="#c1"/></svg></i><i class="b"><svg><use href="#c2"/></svg></i><i class="b"><svg><use href="#c3"/></svg></i><i class="c"></i><i class="pad2"></i></div>
  </div>
  <div class="row r3">
    <div class="tb ml622"><i class="g"></i><i class="b"><svg><use href="#pa"/></svg></i><i class="c"></i><i class="b"><svg><use href="#pb"/></svg></i><i class="c"></i><i class="b"><svg><use href="#pc"/></svg></i><i class="b"><svg><use href="#pd"/></svg></i><i class="c"></i><i class="b"><svg><use href="#pe"/></svg></i><i class="c"></i><i class="b"><svg><use href="#pf"/></svg></i><i class="c"></i><i class="b"><svg><use href="#pg"/></svg></i><i class="b"><svg><use href="#ph"/></svg></i><i class="b"><svg><use href="#pa"/></svg></i><i class="c"></i><i class="c"></i><i class="pad2"></i></div>
  </div>
  <div class="row r4">
    <div class="tb nopad mln15"><i class="b"><svg><use href="#bb"/></svg></i><i class="b"><svg><use href="#bs"/></svg></i><i class="b"><svg><use href="#sx"/></svg></i><i class="b"><svg><use href="#ov"/></svg></i><i class="b"><svg><use href="#gr"/></svg></i><i class="b"><svg><use href="#dp"/></svg></i><i class="s s5"></i><i class="b"><svg><use href="#ex"/></svg></i><i class="b"><svg><use href="#ob"/></svg></i><i class="b"><svg><use href="#pg2"/></svg></i><i class="b"><svg><use href="#sl"/></svg></i><i class="b"><svg><use href="#bx"/></svg></i><i class="b"><svg><use href="#yl"/></svg></i><i class="s s6"></i><i class="b"><svg><use href="#hn"/></svg></i><i class="b"><svg><use href="#bo"/></svg></i><i class="b"><svg><use href="#pr"/></svg></i><i class="b"><svg><use href="#cu"/></svg></i><i class="c"></i><i class="pad2"></i></div>
    <div class="tb ml442"><i class="g"></i><i class="b"><svg><use href="#st"/></svg></i><i class="b"><svg><use href="#sg"/></svg></i><i class="b"><svg><use href="#sh"/></svg></i><i class="b"><svg><use href="#sr"/></svg></i><i class="b"><svg><use href="#sp"/></svg></i><i class="b"><svg><use href="#sm"/></svg></i><i class="b"><svg><use href="#bk"/></svg></i><i class="c"></i><i class="c"></i><i class="pad2"></i></div>
  </div>
  <div class="row r5">
    <div class="tb"><i class="b"><svg><use href="#ty"/></svg></i><i class="s s5"></i><i class="b"><svg><use href="#ck"/></svg></i><i class="b"><svg><use href="#ck2"/></svg></i><i class="b"><svg><use href="#ck3"/></svg></i><i class="s s7"></i><i class="b"><svg><use href="#cs"/></svg></i><i class="c"></i><i class="s s3"></i><i class="g"></i><i class="b"><svg><use href="#hs"/></svg></i><i class="b"><svg><use href="#hg"/></svg></i><i class="b"><svg><use href="#hl"/></svg></i><i class="c"></i><i class="s s5"></i><i class="g"></i><i class="b"><svg><use href="#dk"/></svg></i><i class="b"><svg><use href="#sg2"/></svg></i><i class="b"><svg><use href="#rg"/></svg></i><i class="s s6"></i><i class="b"><svg><use href="#wd"/></svg></i><i class="c"></i><i class="pad4"></i></div>
    <div class="tb ml214"><i class="g"></i><i class="b"><svg><use href="#tri"/></svg></i><i class="b"><svg><use href="#tbx"/></svg></i><i class="b"><svg><use href="#fg"/></svg></i><i class="b"><svg><use href="#fc"/></svg></i><i class="b"><svg><use href="#not"/></svg></i><i class="b"><svg><use href="#dm"/></svg></i><i class="s s7"></i><i class="b f10h7"><svg><use href="#bi"/></svg><em>10H7</em></i><i class="c"></i><i class="pad1"></i></div>
    <div class="tb"><i class="g"></i><i class="b"><svg><use href="#cb3"/></svg></i><i class="b"><svg><use href="#cb4"/></svg></i><i class="c"></i><i class="pad3"></i></div>
    <div class="tb ml73"><i class="g"></i><i class="b"><svg><use href="#nv"/></svg></i><i class="b"><svg><use href="#pu"/></svg></i><i class="b"><svg><use href="#ct"/></svg></i><i class="b"><svg><use href="#ts"/></svg></i><i class="b"><svg><use href="#bf"/></svg></i><i class="s s6"></i><i class="b"><svg><use href="#wv"/></svg></i><i class="b"><svg><use href="#sd"/></svg></i><i class="s s6"></i><i class="b"><svg><use href="#ug"/></svg></i><i class="s s5"></i><i class="b"><svg><use href="#gl"/></svg></i><i class="c"></i><i class="b"><svg><use href="#sd"/></svg></i><i class="s s7"></i><i class="b"><svg><use href="#dh"/></svg></i><i class="c"></i><i class="pad2"></i></div>
  </div>
  <div class="row r6">
    <div class="tb ml702"><i class="g"></i><i class="b"><svg><use href="#fl"/></svg></i><i class="b"><svg><use href="#fm"/></svg></i><i class="b"><svg><use href="#fn"/></svg></i><i class="b"><svg><use href="#fl"/></svg></i><i class="b"><svg><use href="#fm"/></svg></i><i class="b"><svg><use href="#fn"/></svg></i><i class="b"><svg><use href="#fm"/></svg></i><i class="b"><svg><use href="#fp"/></svg></i><i class="b"><svg><use href="#fn"/></svg></i><i class="b"><svg><use href="#fl"/></svg></i><i class="b"><svg><use href="#fn"/></svg></i><i class="s s6"></i><i class="b"><svg><use href="#fp"/></svg></i><i class="b"><svg><use href="#fr"/></svg></i><i class="b"><svg><use href="#fp"/></svg></i><i class="b"><svg><use href="#fr"/></svg></i><i class="b"><svg><use href="#fq"/></svg></i><i class="b"><svg><use href="#fr"/></svg></i><i class="s s6"></i><i class="b"><svg><use href="#fs"/></svg></i><i class="b"><svg><use href="#fs"/></svg></i><i class="s s6"></i><i class="b"><svg><use href="#ft"/></svg></i><i class="c"></i><i class="pad2"></i></div>
  </div>
  <div class="row r7">
    <div class="tb full"><i class="b d"><b>1.00</b></i><i class="b d"><b>1.00</b><small class="pur">±.05</small></i><i class="b d"><b>1.00</b><small class="red2">+.02<br>-.02</small></i><i class="b d"><b>1.00</b><small class="gry">+.00<br>-.00</small></i><i class="b d"><b>1.00</b><small class="red2">+.02<br>-.02</small></i><i class="b d"><b class="boxed">1.00</b></i><i class="b d"><b class="navy">(1.00)</b></i><i class="b d"><b class="blu">10H7</b></i><i class="b d"><b class="blu">10H7</b><small class="blu">(.010)</small></i><i class="b d"><b class="blu">10H7</b><small class="blu">[0.015]</small></i><i class="b d"><b class="blu">10</b><small class="blu">[0.015]</small></i><i class="s s6"></i><i class="b"><svg><use href="#me"/></svg></i><i class="b"><svg><use href="#me"/></svg></i><i class="s s6"></i><i class="b"><svg><use href="#cc"/></svg></i><i class="b"><svg><use href="#cc"/></svg></i><i class="b"><svg><use href="#ag"/></svg></i><i class="c"></i><i class="s s5"></i><i class="g"></i><i class="b"><svg><use href="#ts2"/></svg></i><i class="c more">&raquo;</i><i class="s s4"></i><i class="g"></i><i class="b"><svg><use href="#tq"/></svg></i><i class="b"><svg><use href="#tv"/></svg></i><i class="b"><svg><use href="#tl"/></svg></i><i class="b"><svg><use href="#td"/></svg></i><i class="b"><svg><use href="#tp"/></svg></i><i class="b"><svg><use href="#tg"/></svg></i><i class="b"><svg><use href="#tt"/></svg></i><i class="b"><svg><use href="#tb3"/></svg></i><i class="b"><svg><use href="#tf"/></svg></i><i class="b"><svg><use href="#tm"/></svg></i><i class="b"><svg><use href="#tc"/></svg></i><i class="b"><svg><use href="#tw2"/></svg></i><i class="b"><svg><use href="#ty2"/></svg></i><i class="b"><svg><use href="#tmm"/></svg></i><i class="b"><svg><use href="#tcl"/></svg></i><i class="b"><svg><use href="#tgr"/></svg></i><i class="b"><svg><use href="#tln"/></svg></i><i class="b"><svg><use href="#tcu"/></svg></i><i class="b"><svg><use href="#tgy"/></svg></i><i class="sp13"></i><i class="c more">&raquo;</i><i class="s s4"></i><i class="g"></i><i class="b"><svg><use href="#wb"/></svg></i><i class="b"><svg><use href="#wc"/></svg></i><i class="b"><svg><use href="#wh"/></svg></i><i class="b"><svg><use href="#wk"/></svg></i><i class="s s6"></i><i class="b"><svg><use href="#wo"/></svg></i><i class="b"><svg><use href="#wq"/></svg></i><i class="s s7"></i><i class="b"><svg><use href="#wr"/></svg></i><i class="b"><svg><use href="#wt"/></svg></i><i class="c"></i><i class="s s4"></i><i class="g"></i><i class="b"><svg><use href="#tsl"/></svg></i><i class="b"><svg><use href="#tsn"/></svg></i><i class="b"><svg><use href="#tar"/></svg></i><i class="b"><svg><use href="#tlk"/></svg></i><i class="b"><svg><use href="#tbb"/></svg></i><i class="b"><svg><use href="#tdk"/></svg></i><i class="b"><svg><use href="#tso"/></svg></i><i class="b"><svg><use href="#twn"/></svg></i><i class="b"><svg><use href="#twp"/></svg></i><i class="b"><svg><use href="#tci"/></svg></i><i class="b"><svg><use href="#tlp"/></svg></i><i class="b"><svg><use href="#tgo"/></svg></i><i class="b"><svg><use href="#tgg"/></svg></i></div>
  </div>
  <div class="row r8">
    <div class="combo cb-a"><span class="cb-text">器</span><i class="cb-btn"></i></div>
    <div class="combo cb-b"><span class="cb-text">仅在工作部件内</span><i class="cb-btn"></i></div>
    <i class="b ml10"><svg><use href="#lk"/></svg></i>
    <i class="v v14"></i>
    <i class="b"><svg><use href="#fa"/></svg></i>
    <i class="b ml5 sel"><svg><use href="#fy"/></svg></i>
    <i class="c ml3"></i>
    <i class="b ml4"><svg><use href="#ga"/></svg></i>
    <i class="b ml8"><svg><use href="#gb"/></svg></i>
    <i class="v v14"></i>
    <i class="b"><svg><use href="#dr2"/></svg></i>
    <i class="c ml4"></i>
    <i class="v v10"></i>
    <i class="b big"><svg><use href="#vw"/></svg></i>
    <i class="b big ml8"><svg><use href="#bx"/></svg></i>
    <i class="v v11"></i>
    <i class="w on"><svg><use href="#pnt"/></svg></i>
    <i class="w on"><svg><use href="#lnm"/></svg></i>
    <i class="w on"><svg><use href="#lnc"/></svg></i>
    <i class="w"><svg><use href="#crv"/></svg></i>
    <i class="w on"><svg><use href="#pol"/></svg></i>
    <i class="w"><svg><use href="#int"/></svg></i>
    <i class="w on"><svg><use href="#cin"/></svg></i>
    <i class="w"><svg><use href="#cqd"/></svg></i>
    <i class="w on"><svg><use href="#pls"/></svg></i>
    <i class="w on"><svg><use href="#lnm"/></svg></i>
    <i class="w"><svg><use href="#srf"/></svg></i>
    <i class="v v5"></i>
    <i class="w"><svg><use href="#grd"/></svg></i>
  </div>
</section>

<main class="work">
  <aside class="panel">
    <div class="p-title"><span class="p-name">航器</span><i class="p-max"></i></div>
    <div class="nav">
      <div class="nav-head"><span class="hc1"><i class="sort"></i></span><span class="hc2">最新</span></div>
      <div class="nav-body">
        <div class="tr"><span class="t1"><span class="cut">历史记录模式</span></span><span class="t2"></span></div>
        <div class="tr"><span class="t1"><span class="cut">模型视图</span></span><span class="t2"></span></div>
        <div class="tr"><span class="t1"><i class="dot"></i><span class="in6">摄像机</span></span><span class="t2"></span></div>
        <div class="tr"><span class="t1"><span class="cut">用户表达式</span></span><span class="t2"></span></div>
        <div class="tr"><span class="t1"><span class="cut">模型历史记录</span></span><span class="t2"></span></div>
        <div class="tr"><span class="t1"><i class="tick"></i><svg class="ti"><use href="#me"/></svg><span>基准坐标系 <small>(0)</small></span></span><span class="t2"><svg class="ok" viewBox="0 0 14 14"><path d="M1 7l3-1 2 3 6-8 1 1-6 12H5z"/></svg></span></div>
        <div class="tr"><span class="t1"><i class="tick"></i><svg class="ti"><use href="#skt"/></svg><span>草图 <small>(1) "SKETCH_...</small></span></span><span class="t2"><svg class="ok" viewBox="0 0 14 14"><path d="M1 7l3-1 2 3 6-8 1 1-6 12H5z"/></svg></span></div>
        <div class="tr"><span class="t1"><i class="tick"></i><svg class="ti"><use href="#bo"/></svg><span class="mute">拉伸 <small>(2)</small></span></span><span class="t2"><svg class="ok" viewBox="0 0 14 14"><path d="M1 7l3-1 2 3 6-8 1 1-6 12H5z"/></svg></span></div>
        <div class="tr"><span class="t1"></span><span class="t2"></span></div><div class="tr"><span class="t1"></span><span class="t2"></span></div><div class="tr"><span class="t1"></span><span class="t2"></span></div><div class="tr"><span class="t1"></span><span class="t2"></span></div><div class="tr"><span class="t1"></span><span class="t2"></span></div><div class="tr"><span class="t1"></span><span class="t2"></span></div><div class="tr"><span class="t1"></span><span class="t2"></span></div><div class="tr"><span class="t1"></span><span class="t2"></span></div><div class="tr"><span class="t1"></span><span class="t2"></span></div><div class="tr"><span class="t1"></span><span class="t2"></span></div><div class="tr"><span class="t1"></span><span class="t2"></span></div><div class="tr"><span class="t1"></span><span class="t2"></span></div><div class="tr"><span class="t1"></span><span class="t2"></span></div>
      </div>
      <div class="hscroll"><i class="thumb"></i><i class="chev-r"></i></div>
    </div>
    <div class="split"><i class="grab"></i></div>
    <div class="acc"><span></span><i class="acc-btn"><svg viewBox="0 0 12 8"><path d="M1 1l5 5 5-5" fill="none" stroke="#555" stroke-width="2.200"/></svg></i></div>
    <div class="acc"><span></span><i class="acc-btn"><svg viewBox="0 0 12 8"><path d="M1 1l5 5 5-5" fill="none" stroke="#555" stroke-width="2.200"/></svg></i></div>
    <div class="acc"><span></span><i class="acc-btn"><svg viewBox="0 0 12 8"><path d="M1 1l5 5 5-5" fill="none" stroke="#555" stroke-width="2.200"/></svg></i></div>
  </aside>
  <div class="view">
    <svg class="scene" viewBox="238 269 1202 569">
      <path d="M711 399 1112 515 988 675 586 560Z" fill="none" stroke="#4058e8" stroke-width="2.200"/>
      <g fill="none" stroke="#1414c4" stroke-width="1.500">
        <path d="M865 526V425M865 526 975 558M865 526 922 453"/>
        <path d="M865 472 894 435V487M865 472 926 490V543"/>
        <path d="M865 526 926 543 955 506 895 487Z"/>
      </g>
      <path d="M865 418 861 432H869ZM985 561 970 553 968 560ZM926 448 917 454 922 459Z" fill="#1414c4"/>
      <text class="ax-l" x="860" y="421">Z</text>
      <text class="ax-l" x="921" y="453">Y</text>
      <text class="ax-l ax-x" x="987" y="567">X</text>
      <g fill="none" stroke="#bdbdbd" stroke-width="1">
        <circle cx="761" cy="484" r="12"/>
        <path d="M761 470V498M747 484H775"/>
      </g>
      <g>
        <path d="M297 759 314 765 312 782 293 787 288 770Z" fill="#b4b4b4"/>
        <path d="M288 770 303 775 314 765M303 775 293 787M303 775 312 782" stroke="#d4d4d4" fill="none"/>
        <path d="M286 786V757" stroke="#1b2fb8" stroke-width="2"/>
        <path d="M286 786 317 794" stroke="#a8283a" stroke-width="3"/>
        <circle cx="286" cy="786" r="4" fill="#dcdcdc"/>
        <text class="tr-z" x="282" y="761">Z</text>
        <text class="tr-x" x="318" y="800">X</text>
      </g>
    </svg>
  </div>
</main>

<footer class="status"><span class="st-a"></span></footer>

<div class="taskbar">
  <svg class="orb" viewBox="0 0 24 40"><circle cx="8" cy="14" r="8" fill="#2a7ad8"/><circle cx="6" cy="26" r="9" fill="#e05028"/><circle cx="9" cy="24" r="4" fill="#f0a020"/><circle cx="5" cy="22" r="5" fill="#30a848"/></svg>
  <svg class="ie" viewBox="0 0 34 34"><path d="M7 17a10 10 0 1 1 20 1H12c1 6 10 7 13 2h3c-4 9-21 9-21-3zM12 15h10c-1-5-9-5-10 0z" fill="#2a9ad8"/><path d="M2 32C-1 26 9 10 22 4c7-3 11-2 9 4-1-3-6-3-10 0C11 9 4 20 4 28c0 2 1 3 3 3-2 2-4 2-5 1z" fill="#e0c030"/></svg>
  <div class="tk t-folder"><svg viewBox="0 0 32 32"><path d="M2 4h11l3 3h14v22H2z" fill="#e8cc70"/><path d="M2 11h28v18H2z" fill="#fae9a8"/><path d="M6 4h6v3H6zM20 6h6v3h-6z" fill="#58a068"/><path d="M6 23h20v6H6z" fill="#6ab0e0"/><path d="M11 20h10v9h-3v-6h-4v6h-3z" fill="#4a8ac8"/></svg></div>
  <i class="flag"></i>
  <div class="tk t-cloud"><svg viewBox="0 0 34 34"><rect x="1" y="1" width="32" height="30" rx="5" fill="#1e88e0"/><path d="M1 28c0 4 2 5 5 5h22c3 0 5-1 5-5z" fill="#b8c8d4"/><path d="M10 21a5 5 0 0 1 0-10c3 0 4 3 7 3 1-4 4-6 7-5a6 6 0 0 1 0 12c-3 0-5-2-7-5-2 3-4 5-7 5z" fill="none" stroke="#fff" stroke-width="2"/></svg></div>
  <div class="tk t-baidu"><svg viewBox="0 0 32 32"><rect width="32" height="32" rx="3" fill="#2a98f0"/><circle cx="11" cy="19" r="4" fill="none" stroke="#fff" stroke-width="3.500"/><circle cx="18" cy="11" r="4" fill="none" stroke="#fff" stroke-width="3.500"/><path d="M13 16l3-3" stroke="#fff" stroke-width="3"/><path d="M24 14l3 3M26 23h1" stroke="#fff" stroke-width="3"/></svg></div>
  <div class="tk t-green"><svg viewBox="0 0 30 30"><circle cx="15" cy="15" r="14" fill="#78c028" stroke="#fff"/><path d="M6 14h18v4H11c1 4 8 4 10 1h4c-3 8-20 7-19-5zm5-3c1-4 9-4 10 0z" fill="#fff"/></svg></div>
  <i class="sliver"></i>
  <div class="tk t-note"><svg viewBox="0 0 32 32"><path d="M6 3 24 3l3 24-5 3L2 25z" fill="#7ac4d8"/><path d="M6 3 24 3l2 3H6z" fill="#e4e8e8"/><path d="M22 4l5 23-5 3 3-4z" fill="#f4f4e8"/></svg></div>
  <div class="tk t-nx on"><svg viewBox="0 0 36 32"><circle cx="17" cy="18" r="12" fill="#2a90d8"/><path d="M5 27c10 4 24-4 28-15 0-2-3-2-4-2 3 2-2 10-10 13-6 2-10 3-14 4z" fill="#e0a030"/><path d="M6 2l16 3-5 13z" fill="#c81e3e"/></svg></div>
  <div class="tk t-ppt"><svg viewBox="0 0 32 32"><rect width="32" height="32" rx="5" fill="#f4782e"/><path d="M8 9h14a4 4 0 0 1 0 9H8M8 22h5" fill="none" stroke="#fff" stroke-width="2.200"/></svg></div>
  <div class="tk t-cmd"><svg viewBox="0 0 30 26"><path d="M1 13 17 2l12 11-16 11z" fill="#d8d8d4"/><path d="M6 13 17 6l8 7-11 7z" fill="#26301c"/><path d="M13 10l5 4-3 2zM16 11l3 3" fill="#a8b868" stroke="#a8b868"/></svg></div>
  <div class="tk t-cmd t-rec"><svg viewBox="0 0 30 26"><path d="M1 13 17 2l12 11-16 11z" fill="#d8d8d4"/><path d="M6 13 17 6l8 7-11 7z" fill="#26301c"/><path d="M13 10l5 4-3 2z" fill="#a8b868"/><circle cx="24" cy="20" r="6" fill="#e01818" stroke="#eee"/></svg></div>
  <svg class="tray-icons" viewBox="0 0 60 18"><circle cx="8" cy="8" r="7" fill="#e8c840"/><rect x="12" y="7" width="10" height="9" fill="#c8a030"/><path d="M32 2h14v9h-4v3l-3-3h-7z" fill="#fff" stroke="#222"/></svg>
</div>

<aside class="mark">
  <svg class="mark-art" viewBox="0 0 96 116"><path d="M34 88C26 80 21 72 23 63 26 52 36 47 44 49 58 52 69 63 69 78 69 92 65 104 56 106 49 107 46 100 50 95 53 91 57 94 57 90 60 84 56 74 47 73 40 72 36 78 34 88Z" fill="#0c2590"/><path d="M83 5C78 18 68 30 67 42 67 55 78 62 79 80 80 95 78 105 83 118 88 105 86 95 87 80 88 62 99 55 99 42 98 30 88 18 83 5Z" fill="#a00b12"/></svg>
  <span class="mark-cn"><b class="mb">月</b><b class="mr">明</b></span>
  <span class="mark-qq">QQ3173</span>
</aside>
<span class="tray">&#9650;</span>
</body>
</html>
```
FILE: styles.css
```css
* { box-sizing: border-box; }
html, body { margin: 0; padding: 0; }
body { width: 1440px; height: 900px; overflow: hidden; display: flex; flex-direction: column; position: relative; font-family: "Noto Sans CJK SC", "Liberation Sans", sans-serif; background: #dcdcdc; }
.defs { position: absolute; width: 0; height: 0; }
i, em { font-style: normal; }

.title { flex: 0 0 26px; height: 26px; min-height: 0; display: flex; align-items: center; justify-content: space-between; background: #151515; border-top: 3px solid #3e3e3e; padding: 0 13px 1px 2px; color: #f2f2f2; line-height: 20px; }
.title-text { font-size: 15.800px; white-space: nowrap; font-weight: 300; }
.logo { font: bold 15px/20px "Liberation Sans", sans-serif; letter-spacing: .5px; color: #f4f4f4; }

.menu { flex: 0 0 23px; height: 23px; min-height: 0; display: flex; align-items: center; background: #e3e3e3; border-bottom: 1px solid #b4b4b4; padding: 0 0 4px 5px; font-size: 12px; line-height: 16px; color: #222; white-space: nowrap; }
.menu > span { width: 55px; }
.menu small { font: 10px "Liberation Mono", monospace; }
.menu .m-pref { margin-left: 12px; width: 66px; }
.menu .m-win { width: 55px; }
.menu .m-gc { width: 62px; }
.menu .m-help { width: 55px; }

.tools { flex: 0 0 220px; min-height: 0; display: flex; flex-direction: column; background: linear-gradient(#e0e0e0, #d0d0d0 60%, #d6d6d6); }
.tools svg { filter: blur(.3px); }
.row { display: flex; align-items: stretch; flex: 0 0 26px; }
.r2 { flex-basis: 30px; }
.r8 { flex: 0 0 34px; align-items: center; padding-bottom: 2px; background: #d4d4d4; }
.tb { display: flex; align-items: center; padding-left: 2px; background: #d9d9d9; box-shadow: inset 1px 1px 0 #efefef, inset -1px -1px 0 #b8b8b8; }
.tb.nopad { padding-left: 0; }
.full { width: 1440px; box-shadow: inset 0 1px 0 #f0f0f0, inset 0 -1px 0 #a8a8a8; padding-left: 1px; }
.ml402 { margin-left: 402px; }
.ml622 { margin-left: 622px; }
.ml702 { margin-left: 702px; }
.ml442 { margin-left: 442px; }
.ml214 { margin-left: 214px; }
.ml73 { margin-left: 73px; }
.ml2 { margin-left: 2px; }
.mln15 { margin-left: -15px; }
.ml3 { margin-left: 3px; }
.ml4 { margin-left: 4px; }
.ml5 { margin-left: 5px; }
.ml8 { margin-left: 8px; }
.ml10 { margin-left: 10px; }

.b { flex: 0 0 23px; min-width: 0; height: 23px; display: flex; align-items: center; justify-content: center; }
.b svg { flex: none; width: 20px; height: 20px; }
.c { flex: 0 0 12px; height: 23px; display: flex; align-items: center; justify-content: center; position: relative; }
.c::after { content: ""; border: 3.500px solid transparent; border-top: 4px solid #111; border-bottom: 0; margin-top: 4px; }
.more { font: bold 11px/1 "Liberation Sans", sans-serif; align-items: flex-start; padding-top: 1px; color: #111; }
.more::after { position: absolute; top: 11px; margin: 0; }
.g { flex: 0 0 5px; height: 18px; background: radial-gradient(circle, #8a8a8a 1px, transparent 1.300px) 0 0 / 4px 4px repeat-y; }
.s { display: block; height: 100%; position: relative; }
.s::after { content: ""; position: absolute; left: 50%; top: 1px; bottom: 1px; width: 1px; background: #f0f0f0; box-shadow: -1px 0 0 #bcbcbc; }
.s3 { flex: 0 0 3px; } .s4 { flex: 0 0 4px; } .s5 { flex: 0 0 5px; } .s6 { flex: 0 0 6px; } .s7 { flex: 0 0 7px; }
.pad1 { flex: 0 0 1px; } .pad2 { flex: 0 0 2px; } .pad3 { flex: 0 0 3px; } .pad4 { flex: 0 0 4px; }
.sp13 { flex: 0 0 13px; }

.search { flex: 0 0 111px; height: 20px; margin-left: 4px; display: flex; align-items: center; justify-content: space-between; background: #fafafa; border: 1px solid #c4c4c4; border-radius: 2px; padding: 0 1px 0 2px; font-size: 12px; line-height: 16px; color: #9c9c9c; }
.search span { padding-bottom: 2px; }
.search svg { width: 18px; height: 18px; }
.finish { flex: 0 0 51px; font-size: 12px; line-height: 16px; color: #a4a4a4; white-space: nowrap; margin-left: -1px; padding-bottom: 2px; }
.f10h7 { flex-direction: column; }
.f10h7 svg { height: 10px; width: 18px; }
.f10h7 em { font: bold 9px/9px "Liberation Sans", sans-serif; color: #7a2020; }

.d { flex-direction: column; font: bold 8px/8px "Liberation Sans", sans-serif; color: #333; overflow: hidden; }
.d b { letter-spacing: -.2px; }
.d small { font-size: 7px; line-height: 6px; text-align: center; white-space: nowrap; letter-spacing: -.3px; }
.pur { color: #5a3a7a; } .red2 { color: #b0304a; } .gry { color: #777; } .navy { color: #5a1a3a; } .blu { color: #2a2ab0; }
.boxed { border: 1.500px solid #b01a1a; padding: 1px; background: #f4f4f4; color: #222; }

.combo { height: 17px; display: flex; background: #fafafa; border: 1px solid #8f8f8f; }
.cb-a { width: 40px; margin-left: -1px; border-left: 0; }
.cb-b { width: 120px; margin-left: 9px; }
.cb-text { flex: 1; font-size: 12px; line-height: 14px; color: #111; white-space: nowrap; }
.cb-btn { flex: 0 0 16px; background: linear-gradient(#cfe0f8, #7f9fd0); border: 1px solid #5f7fb0; border-radius: 2px; display: flex; align-items: center; justify-content: center; }
.cb-btn::after { content: ""; border: 5px solid transparent; border-top: 6px solid #111; border-bottom: 0; }
.v { display: block; height: 30px; position: relative; }
.v::after { content: ""; position: absolute; left: 50%; top: 0; bottom: 0; width: 1px; background: #eee; box-shadow: -1px 0 0 #b8b8b8; }
.v5 { flex: 0 0 6px; } .v10 { flex: 0 0 10px; } .v11 { flex: 0 0 11px; } .v14 { flex: 0 0 14px; }
.sel { border: 1px solid #b81e2e; height: 23px; background: #e4e4e4; }
.big svg { width: 26px; height: 26px; }
.w { flex: 0 0 29px; height: 29px; margin-right: 2px; display: flex; align-items: center; justify-content: center; border-radius: 2px; }
.w svg { width: 25px; height: 25px; }
.w.on { background: #fbfbfb; border: 1px solid #6e6e6e; }

.work { flex: 0 0 569px; display: flex; min-height: 0; }
.panel { flex: 0 0 238px; background: #e6e6e6; display: flex; flex-direction: column; border-bottom: 2px solid #b2b2b2; padding-right: 11px; }
.p-title { flex: 0 0 31px; display: flex; align-items: center; justify-content: space-between; padding: 0 5px 1px 0; line-height: 18px; }
.p-name { font-size: 13px; font-weight: 700; margin-left: -6px; color: #222; }
.p-max { width: 13px; height: 12px; margin-top: 2px; border: 1px solid #111; border-top-width: 2px; background: #f4f4f4; }
.nav { flex: 0 0 450px; display: flex; flex-direction: column; border-top: 1px solid #8c8c8c; border-right: 1px solid #8c8c8c; border-bottom: 1px solid #8c8c8c; background: #fff; overflow: hidden; }
.nav-head { flex: 0 0 17px; display: flex; background: linear-gradient(#f8f8f8, #efefef 60%, #d6d6d6); border-bottom: 1px solid #bbb; font-size: 12px; color: #222; }
.hc1 { flex: 0 0 151px; border-right: 1px solid #aaa; position: relative; }
.hc2 { padding-left: 5px; line-height: 18px; }
.sort { position: absolute; left: 0; top: 6px; border: 4px solid transparent; border-bottom: 4px solid #222; border-top: 0; }
.nav-body { flex: 0 0 414px; overflow: hidden; }
.tr { display: flex; height: 20px; border-bottom: 1px solid #e6e6e6; background: #fff; font-size: 12px; color: #1c1c1c; line-height: 16px; white-space: nowrap; }
.tr:nth-child(even) { background: #f4f4f4; }
.t1 { flex: 0 0 152px; border-right: 1px solid #e2e2e2; display: flex; align-items: center; padding: 0 0 2px 2px; overflow: hidden; }
.t2 { flex: 1; display: flex; align-items: center; padding-left: 6px; background: #fdfdfd; }
.tr:nth-child(even) .t2 { background: #f6f6f6; }
.cut { margin-left: -12px; }
.in6 { margin-left: 4px; }
.dot { width: 4px; height: 8px; margin-left: -2px; border-radius: 0 4px 4px 0; background: #555; }
.tick { width: 6px; height: 10px; margin-left: -2px; border: 1px solid #111; border-left: 0; background: #5fb95f; }
.ti { width: 16px; height: 16px; margin: 0 2px 0 0; flex: none; }
.tr small { font: 10px "Liberation Mono", monospace; margin-left: 3px; }
.mute { color: #8e8e8e; font-weight: 700; }
.ok { width: 14px; height: 14px; fill: #1fa845; }
.hscroll { flex: 0 0 17px; background: #efefef; display: flex; align-items: center; justify-content: space-between; padding-right: 5px; }
.thumb { width: 133px; height: 15px; background: #c8c8c8; }
.chev-r { width: 6px; height: 6px; border: solid #444; border-width: 1.500px 1.500px 0 0; transform: rotate(45deg); margin-right: 2px; }
.split { flex: 0 0 14px; display: flex; align-items: center; justify-content: center; padding-right: 49px; background: linear-gradient(#e6e6e6 6px, #c8c8c8 6px, #c8c8c8 7px, #e6e6e6 7px); }
.grab { width: 50px; height: 6px; background: #c9c9c9; border: 1px solid #b0b0b0; }
.acc { flex: 0 0 23px; display: flex; justify-content: space-between; border-bottom: 1px solid #9c9c9c; background: linear-gradient(#f6f6f6 40%, #d8d8d8); }
.acc-btn { flex: 0 0 22px; background: linear-gradient(#efefef, #d4d4d4); border-left: 1px solid #bdbdbd; border-right: 1px solid #9c9c9c; display: flex; align-items: center; justify-content: center; }
.acc-btn svg { width: 12px; height: 8px; }

.view { flex: 1; background: #000; }
.scene { display: block; width: 1202px; height: 569px; }
.ax-l { font: 13px "Liberation Sans", sans-serif; fill: #1414c4; }
.tr-z { font: 11px "Liberation Sans", sans-serif; fill: #1b2fb8; }
.tr-x { font: 11px "Liberation Sans", sans-serif; fill: #a8283a; }

.status { flex: 0 0 22px; display: flex; background: #e1e1e1; }
.st-a { width: 663px; border-right: 1px solid #f8f8f8; }

.taskbar { flex: 0 0 40px; height: 40px; min-height: 0; display: flex; align-items: stretch; position: relative; background: #4e7a6c; border-top: 1px solid #3f6558; padding-top: 1px; }
.orb { width: 24px; height: 40px; margin-top: -2px; flex: 0 0 24px; margin-left: -8px; }
.ie { width: 34px; height: 34px; flex: 0 0 34px; margin: 1px 0 0 32px; }
.tk { flex: 0 0 58px; margin-left: 4px; display: flex; align-items: center; justify-content: center; background: #6f918a; box-shadow: inset 0 0 0 1px #8fa9a3; }
.tk svg { width: 32px; height: 32px; }
.t-folder { margin-left: 16px; }
.flag { flex: 0 0 2px; margin-left: 3px; background: #e6e23a; }
.t-cloud { flex-basis: 55px; margin-left: 2px; }
.t-green { flex-basis: 50px; }
.t-green svg { width: 28px; height: 28px; }
.sliver { flex: 0 0 5px; margin-left: 4px; background: #6f918a; }
.t-note { margin-left: 3px; }
.t-nx { background: #8aa8a2; box-shadow: inset 0 0 0 1px #dfe9e7; }
.t-nx svg { width: 36px; }
.t-cmd svg { width: 30px; height: 26px; }
.tray-icons { position: absolute; left: 1354px; top: 17px; width: 60px; height: 18px; }

.mark { position: absolute; left: 1344px; top: 722px; width: 96px; height: 178px; background: rgba(255, 255, 255, .52); overflow: hidden; }
.mark-art { position: absolute; left: 0; top: 0; width: 96px; height: 116px; }
.mark-cn { position: absolute; left: 30px; top: 108px; font: 500 40px/48px "Noto Sans CJK SC", sans-serif; white-space: nowrap; letter-spacing: -2px; }
.mb { color: #5478c4; font-weight: 500; }
.mr { color: #d28894; font-weight: 500; }
.mark-qq { position: absolute; left: 0; top: 149px; font: 700 28px/28px "Liberation Serif", serif; letter-spacing: 1.500px; color: #244a42; white-space: nowrap; transform: scaleX(.8); transform-origin: left top; }
.tray { position: absolute; left: 1337px; top: 878px; font-size: 6px; color: #fff; line-height: 6px; }
```
